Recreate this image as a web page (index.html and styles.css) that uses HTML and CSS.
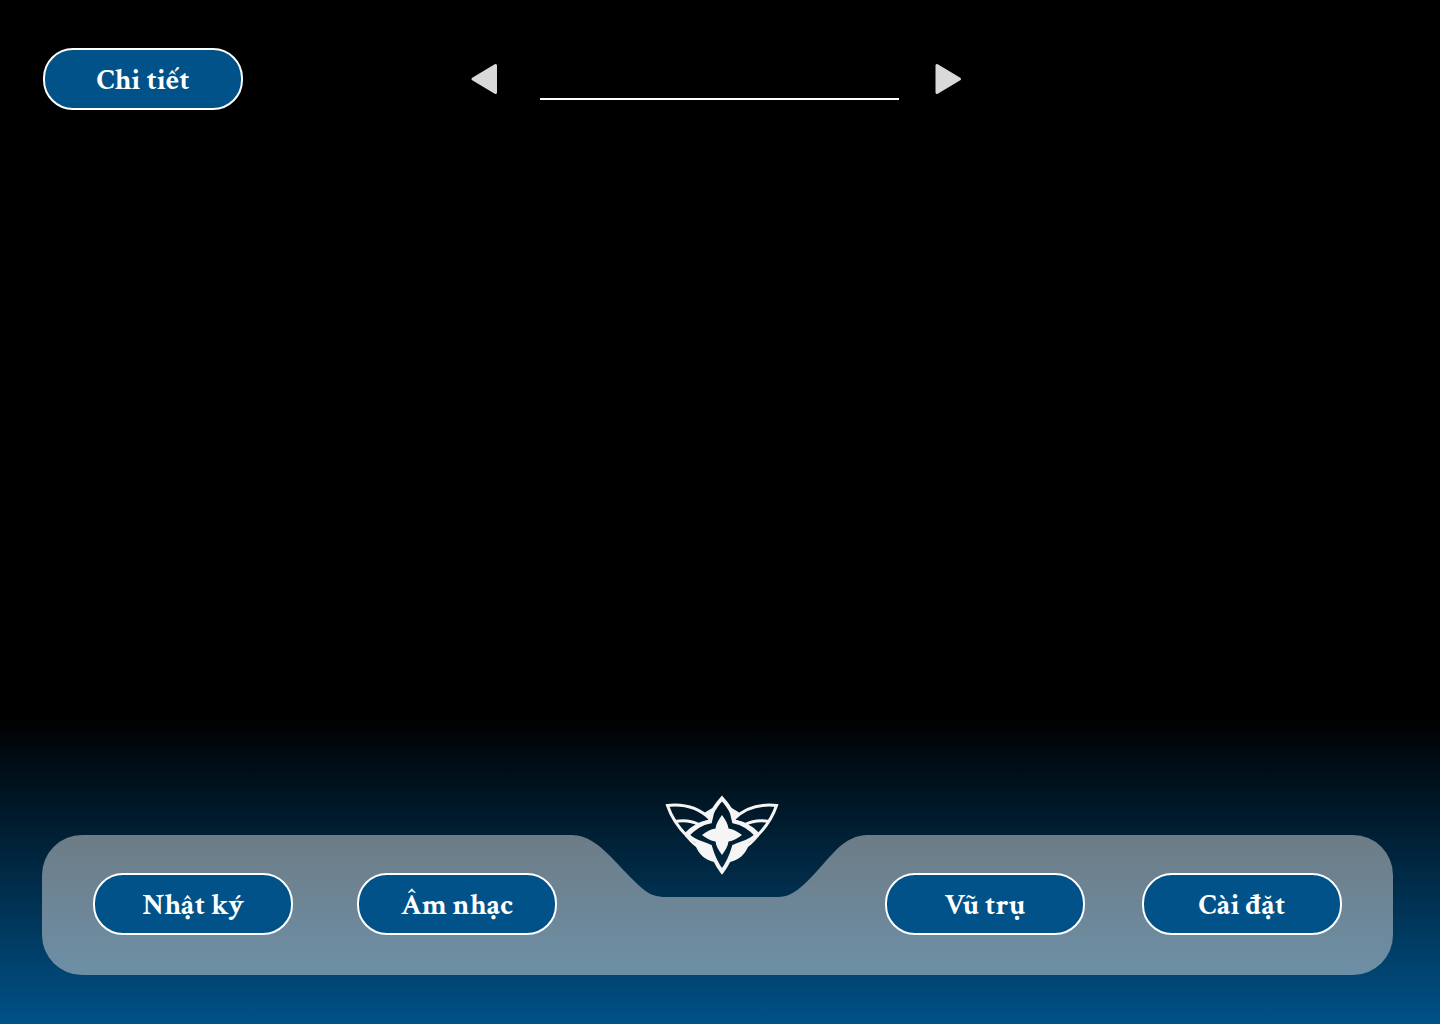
FILE: index.html
```html
<!DOCTYPE html>
<html lang="vi">
<head>
<meta charset="utf-8">
<meta name="viewport" content="width=device-width, initial-scale=1">
<title>Vũ trụ</title>
<link rel="stylesheet" href="styles.css">
</head>
<body>
<header class="topbar">
  <button class="pill" type="button">Chi tiết</button>
  <div class="picker">
    <button class="arrow" type="button" aria-label="Trước">
      <svg width="27" height="32" viewBox="0 0 27 32" aria-hidden="true"><path class="arrow-shape" d="M3 16 25.500 2.500V29.500Z"/></svg>
    </button>
    <input class="picker-name" type="text" aria-label="Tên">
    <button class="arrow" type="button" aria-label="Sau">
      <svg width="27" height="32" viewBox="0 0 27 32" aria-hidden="true"><path class="arrow-shape" d="M24.500 16 2 2.500V29.500Z"/></svg>
    </button>
  </div>
</header>
<main class="stage"></main>
<nav class="dock">
  <div class="wing wing-left">
    <button class="pill" type="button">Nhật ký</button>
    <button class="pill" type="button">Âm nhạc</button>
  </div>
  <div class="notch">
    <svg class="notch-shape" width="300" height="140" viewBox="0 0 300 140" aria-hidden="true">
      <path d="M0 0H2C17 0 29 10 40 21C51 32 62 45 73 54C80 60 87 62 96 62H208C217 62 224 58 231 52C243 42 255 26 267 14C277 5 286 0 298 0H300V140H0Z"/>
    </svg>
    <svg class="emblem" width="124" height="80" viewBox="0 0 124 80" role="img" aria-label="Biểu tượng">
      <defs>
        <g id="wing">
          <path class="line" d="M50 24C38 12 22 9 7.500 10.500C11 21 17 31 27 41"/>
          <path class="line" d="M15 26.500C23 25 32 26 39 29.500M26 39C32 32 40 28 50 26"/>
          <path class="solid" d="M44 18 54 12 50 24ZM26 40 34 47 51 52 54 67C45 65 39 59 36 52C31 48 28 45 25 41Z"/>
        </g>
      </defs>
      <use href="#wing"/>
      <use href="#wing" transform="translate(124 0) scale(-1 1)"/>
      <path class="line star" d="M62 3.500C58 8 54 13 52 18L50 26.500C42 28 33 34 27.500 40C34 47 42 48 50 51.500C53 62 57 70 62 76.500C67 70 71 62 74 51.500C82 48 90 47 96.500 40C91 34 82 28 74 26.500L72 18C70 13 66 8 62 3.500Z"/>
      <path class="solid" d="M62 20C65 24 68 29 68.500 33.500C73 34 78 37 82 40C78 43 73 46 68.500 46.500C68 51 65 56 62 60C59 56 56 51 55.500 46.500C51 46 46 43 42 40C46 37 51 34 55.500 33.500C56 29 59 24 62 20Z"/>
    </svg>
  </div>
  <div class="wing wing-right">
    <button class="pill" type="button">Vũ trụ</button>
    <button class="pill" type="button">Cài đặt</button>
  </div>
</nav>
</body>
</html>
```
FILE: styles.css
```css
* {
  box-sizing: border-box;
}

body {
  display: flex;
  flex-direction: column;
  min-height: 100vh;
  margin: 0;
  padding: 48px 47px 49px 42px;
  background: linear-gradient(to bottom, #000 70%, #005288 100%);
  font-family: "Crimson Text", "Liberation Serif", serif;
}

.topbar {
  display: grid;
  grid-template-columns: 1fr auto 1fr;
  align-items: center;
  padding: 0 5px 0 1px;
}

.pill {
  width: 200px;
  height: 62px;
  padding: 2px 0 0;
  border: 2px solid #fff;
  border-radius: 30px;
  background: #005288;
  color: #fff;
  font: inherit;
  font-size: 29px;
  font-weight: 700;
  line-height: 32px;
  cursor: pointer;
}

.picker {
  display: flex;
  align-items: center;
}

.arrow {
  display: flex;
  padding: 0;
  border: 0;
  background: none;
  cursor: pointer;
}

.arrow-shape {
  fill: #d9d9d9;
  stroke: #d9d9d9;
  stroke-width: 3;
  stroke-linejoin: round;
}

.picker-name {
  width: 359px;
  height: 42px;
  margin: 0 36px 0 43px;
  padding: 0;
  border: 0;
  border-bottom: 2px solid #fff;
  background: transparent;
  color: #fff;
  font: inherit;
  font-size: 29px;
  text-align: center;
  outline: none;
}

.stage {
  flex: 1;
}

.dock {
  display: grid;
  grid-template-columns: 528fr 300px 523fr;
  height: 140px;
}

.wing {
  display: flex;
  align-items: center;
  padding-bottom: 2px;
  background: rgba(217, 217, 217, 0.5);
}

.wing-left {
  gap: 64px;
  padding-left: 51px;
  border-radius: 40px 0 0 40px;
}

.wing-right {
  gap: 57px;
  justify-content: flex-end;
  padding-right: 51px;
  border-radius: 0 40px 40px 0;
}

.notch {
  position: relative;
}

.notch-shape {
  display: block;
  fill: rgba(217, 217, 217, 0.5);
}

.emblem {
  position: absolute;
  top: -40px;
  left: 90px;
}

.line {
  fill: none;
  stroke: #f5f5f5;
  stroke-width: 3;
}

.star {
  stroke-width: 4;
}

.solid {
  fill: #f5f5f5;
}
```
